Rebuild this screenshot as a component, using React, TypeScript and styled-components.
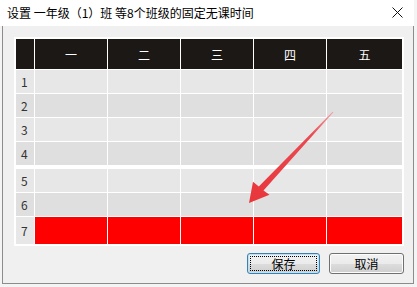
import React from "react";
import styled, { createGlobalStyle } from "styled-components";

const Global = createGlobalStyle`
  html, body { margin: 0; padding: 0; background: #f4f4f4; }
  body { font-family: "Noto Sans CJK SC", "Microsoft YaHei", sans-serif; font-size: 12px; color: #000; }
  * { box-sizing: border-box; }
`;

const Page = styled.div`
  position: relative;
  width: 417px;
  height: 287px;
  overflow: hidden;
`;

const Window = styled.div`
  width: 414px;
  display: flex;
  flex-direction: column;
`;

const TitleBar = styled.div`
  height: 26px;
  background: #ffffff;
  display: flex;
  align-items: center;
  justify-content: space-between;
  padding: 0 11px 1px 7px;
  font-size: 12px;
  line-height: 1;
  color: #000;
`;

const CloseIcon = styled.svg`
  width: 11px;
  height: 11px;
  display: block;
`;

const Client = styled.div`
  margin-left: 2px;
  height: 258px;
  background: #f0f0f0;
  border: 1px solid #8c8c8c;
  border-top: none;
  padding: 11px 9px 0 11px;
  display: flex;
  flex-direction: column;
`;

const Table = styled.div`
  width: 390px;
  background: #ffffff;
  padding: 2px;
  display: flex;
  flex-direction: column;
  gap: 1px;
`;

const Row = styled.div<{ $h: number; $mt?: number }>`
  display: grid;
  grid-template-columns: 18px repeat(4, 72px) 75px;
  gap: 1px;
  height: ${(p) => p.$h}px;
  margin-top: ${(p) => p.$mt ?? 0}px;
`;

const HeadCell = styled.div`
  background: #1c1816;
  color: #ffffff;
  display: flex;
  align-items: center;
  justify-content: center;
  font-size: 12px;
`;

const NumCell = styled.div<{ $shade: string }>`
  background: ${(p) => p.$shade};
  color: #333;
  display: flex;
  align-items: center;
  padding-left: 5px;
  font-size: 12px;
`;

const Cell = styled.div<{ $shade: string }>`
  background: ${(p) => p.$shade};
`;

const ButtonBar = styled.div`
  margin-top: 7px;
  display: flex;
  justify-content: flex-end;
  gap: 9px;
  padding-right: 0px;
`;

const Button = styled.button<{ $default?: boolean; $w: number }>`
  width: ${(p) => p.$w}px;
  height: 21px;
  padding: 0;
  border-radius: 3px;
  border: 1px solid ${(p) => (p.$default ? "#3c7fb1" : "#707070")};
  background: linear-gradient(#f2f2f2 0%, #ebebeb 50%, #dddddd 51%, #cfcfcf 100%);
  font-family: "Noto Sans CJK SC", sans-serif;
  font-size: 12px;
  color: #000;
  display: flex;
  align-items: center;
  justify-content: center;
  position: relative;
  box-shadow: ${(p) => (p.$default ? "inset 0 0 0 1px #b8e3f8" : "inset 0 0 0 1px #fcfcfc")};
`;

const FocusRing = styled.span`
  position: absolute;
  inset: 2px;
  border: 1px dotted #000;
  border-radius: 1px;
`;

const Overlay = styled.svg`
  position: absolute;
  left: 0;
  top: 0;
  pointer-events: none;
`;

const days = ["一", "二", "三", "四", "五"];
const rows = [
  { n: 1, shade: "#e7e7e7", h: 23, mt: 0 },
  { n: 2, shade: "#dfdfdf", h: 23, mt: 0 },
  { n: 3, shade: "#e7e7e7", h: 23, mt: 0 },
  { n: 4, shade: "#dfdfdf", h: 23, mt: 0 },
  { n: 5, shade: "#e7e7e7", h: 23, mt: 3 },
  { n: 6, shade: "#dfdfdf", h: 23, mt: 0 },
  { n: 7, shade: "#ff0000", h: 27, mt: 0 },
];

export default function App() {
  return (
    <Page>
      <Global />
      <Window>
        <TitleBar>
          <span>设置 一年级（1）班 等8个班级的固定无课时间</span>
          <CloseIcon viewBox="0 0 11 11">
            <path d="M0.5 0.5 L10.5 10.5 M10.5 0.5 L0.5 10.5" stroke="#111" strokeWidth="1" fill="none" />
          </CloseIcon>
        </TitleBar>
        <Client>
          <Table>
            <Row $h={30}>
              <HeadCell />
              {days.map((d) => (
                <HeadCell key={d}>{d}</HeadCell>
              ))}
            </Row>
            {rows.map((r) => (
              <Row key={r.n} $h={r.h} $mt={r.mt}>
                <NumCell $shade={r.n === 7 ? "#e7e7e7" : r.shade}>{r.n}</NumCell>
                {days.map((d) => (
                  <Cell key={d} $shade={r.shade} />
                ))}
              </Row>
            ))}
          </Table>
          <ButtonBar>
            <Button $default $w={73}>
              <FocusRing />
              保存
            </Button>
            <Button $w={75}>取消</Button>
          </ButtonBar>
        </Client>
      </Window>
      <Overlay width="417" height="287" viewBox="0 0 417 287">
        <defs>
          <linearGradient id="arrowGrad" x1="333" y1="112" x2="249" y2="203" gradientUnits="userSpaceOnUse">
            <stop offset="0" stopColor="#f2a0a4" />
            <stop offset="0.25" stopColor="#ea4a50" />
            <stop offset="1" stopColor="#e8353b" />
          </linearGradient>
        </defs>
        <polygon
          points="333.4,112.3 332.6,111.7 258.8,186.6 253,181.8 249,203 269.5,194.8 263.5,190.6"
          fill="url(#arrowGrad)"
        />
      </Overlay>
    </Page>
  );
}
